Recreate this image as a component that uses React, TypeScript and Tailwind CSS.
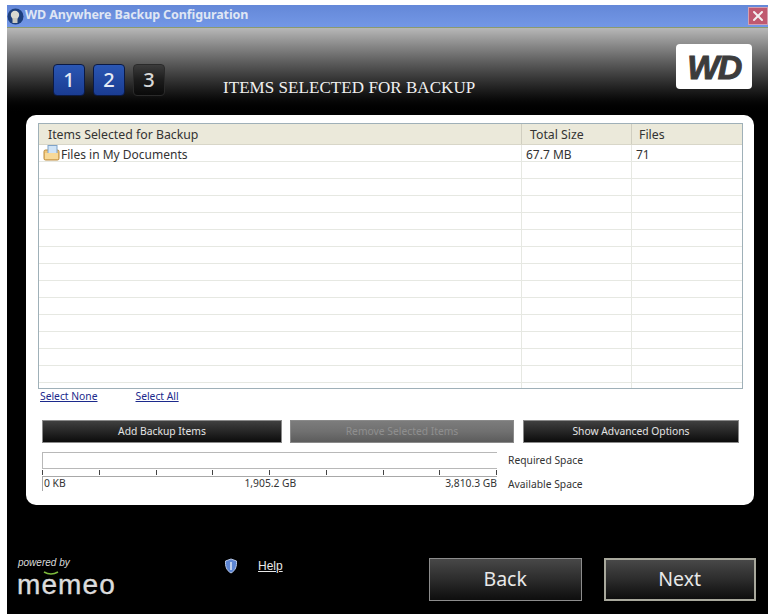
import { X } from "lucide-react";

const rows = [
  { name: "Files in My Documents", size: "67.7 MB", files: "71" },
  ...Array.from({ length: 14 }, () => ({ name: "", size: "", files: "" })),
];

function Step({ n, on }: { n: string; on: boolean }) {
  return (
    <div
      className={
        on
          ? "w-8 h-8 flex items-center justify-center rounded-sm border border-[#0b1a44] bg-gradient-to-b from-[#2b57b4] to-[#1a3c92] text-[#e6ebf5] text-[20px] font-medium"
          : "w-8 h-8 flex items-center justify-center rounded-sm border border-[#2a2a2a] bg-gradient-to-b from-[#3c3c3c] via-[#1c1c1c] to-[#0a0a0a] text-[#d8d8d8] text-[20px] font-medium"
      }
    >
      {n}
    </div>
  );
}

function DarkButton({ label, className }: { label: string; className: string }) {
  return (
    <div
      className={
        "h-[23px] flex items-center justify-center border border-[#8a8a8a] bg-gradient-to-b from-[#404040] via-[#262626] to-[#0c0c0c] text-[#e4e4e4] text-[10.3px] " +
        className
      }
    >
      {label}
    </div>
  );
}

function NavButton({ label, className }: { label: string; className: string }) {
  return (
    <div
      className={
        "h-[43px] pb-[2px] flex items-center justify-center bg-gradient-to-b from-[#484848] via-[#2c2c2c] to-[#0e0e0e] text-[#e8e8e8] text-[19.5px] " +
        className
      }
    >
      {label}
    </div>
  );
}

export default function App() {
  return (
    <div className="w-[773px] h-[615px] bg-white pt-[5px] pl-[7px] pr-[5px] pb-px font-['Noto_Sans',sans-serif] overflow-hidden">
      <div className="h-full flex flex-col bg-black">
        {/* title bar */}
        <div className="h-[23px] shrink-0 flex items-center bg-gradient-to-b from-[#6488d8] to-[#7397e6] border-b border-[#8b9a70]">
          <svg width="17" height="17" viewBox="0 0 17 17" className="shrink-0">
            <circle cx="8.5" cy="8.5" r="8" fill="#1d3f7c" />
            <circle cx="8" cy="7" r="4.2" fill="#d8d8d0" />
            <rect x="5.5" y="10" width="5" height="5" fill="#c9c9c0" />
          </svg>
          <span className="ml-px -mt-[2px] text-[12.5px] font-bold text-[#dfe6f4] tracking-[-0.1px]">
            WD Anywhere Backup Configuration
          </span>
          <div className="ml-auto h-[18px] w-5 flex items-center justify-center bg-[#c0596f] border border-[#d4a0b0]">
            <X size={16} strokeWidth={3} color="#f4f0f0" />
          </div>
        </div>

        {/* header */}
        <div className="h-[87px] shrink-0 flex bg-gradient-to-b from-[#b8b8b8] via-[#333333] via-60% to-black pl-[46px] pr-[16px]">
          <div className="mt-[36px] flex gap-2 h-8">
            <Step n="1" on />
            <Step n="2" on />
            <Step n="3" on={false} />
          </div>
          <div className="ml-[58px] mt-[50px] font-['Liberation_Serif',serif] text-[17px] leading-[20px] text-[#f0f0f0] tracking-[0.06px]">
            ITEMS SELECTED FOR BACKUP
          </div>
          <div className="ml-auto mt-4 w-[76px] h-[45px] rounded-[4px] bg-white flex items-center justify-center">
            <span className="font-['Liberation_Sans',sans-serif] italic font-bold text-[34px] leading-none text-[#3c3c3c] tracking-[-1.5px] [-webkit-text-stroke:1px_#3c3c3c]">
              WD
            </span>
          </div>
        </div>

        {/* panel */}
        <div className="mx-[19px] mr-[14px] h-[390px] shrink-0 rounded-[10px] bg-white pt-2 pl-3 pr-[11px]">
          <div className="h-[266px] border border-[#9fb0b8] overflow-hidden text-[12px] text-[#333333]">
            <div className="h-[21px] flex items-center bg-[#ebe9da] border-b border-[#d8d6c8] leading-none text-[12.3px]">
              <div className="w-[482px] pl-[9px] pt-[3px]">Items Selected for Backup</div>
              <div className="w-[110px] pl-[8px] pt-[3px] border-l border-[#d0cec0] h-full flex items-center">Total Size</div>
              <div className="flex-1 pl-[7px] pt-[3px] border-l border-[#d0cec0] h-full flex items-center">Files</div>
            </div>
            {rows.map((r, i) => (
              <div key={i} className="h-[17px] flex border-b border-[#e6e8e2] leading-[20px]">
                <div className="w-[482px] flex items-start pl-[4px]">
                  {r.name && (
                    <svg width="18" height="16" viewBox="0 0 18 16" className="shrink-0">
                      <rect x="1" y="5" width="15" height="10" rx="1.5" fill="#f2c678" stroke="#b98a3c" />
                      <rect x="5" y="0.5" width="9" height="10" fill="#cfe3f6" stroke="#7fa3c8" />
                      <path d="M2 8h13v6H2z" fill="#f7d998" />
                    </svg>
                  )}
                  <span>{r.name}</span>
                </div>
                <div className="w-[110px] pl-[4px] border-l border-[#e6e8e2]">{r.size}</div>
                <div className="flex-1 pl-[4px] border-l border-[#e6e8e2]">{r.files}</div>
              </div>
            ))}
          </div>

          <div className="-mt-px pl-[2px] flex gap-[38px] text-[10.3px] leading-[16px] text-[#1c2a8c] underline">
            <span>Select None</span>
            <span>Select All</span>
          </div>

          <div className="mt-[16px] pl-1 flex">
            <DarkButton label="Add Backup Items" className="w-[240px]" />
            <DarkButton label="Remove Selected Items" className="ml-2 w-[224px] !from-[#7c7c7c] !via-[#707070] !to-[#5c5c5c] !text-[#8f8f8f]" />
            <DarkButton label="Show Advanced Options" className="ml-[9px] w-[216px]" />
          </div>

          <div className="mt-[9px] pl-1 flex text-[10.3px] text-[#333333]">
            <div className="w-[455px]">
              <div className="h-[17px] border border-r-0 border-[#b8b8b8]" />
              <div className="h-[7px] flex justify-between">
                {Array.from({ length: 9 }, (_, i) => (
                  <div key={i} className="w-px h-[5px] mt-px bg-[#444444]" />
                ))}
              </div>
              <div className="h-[15px] border-t border-l border-[#a8a8a8] flex justify-between pl-px leading-[13px]">
                <span>0 KB</span>
                <span className="ml-[30px]">1,905.2 GB</span>
                <span>3,810.3 GB</span>
              </div>
            </div>
            <div className="ml-[11px] leading-[16px]">
              <div>Required Space</div>
              <div className="mt-2">Available Space</div>
            </div>
          </div>
        </div>

        {/* footer */}
        <div className="flex-1 flex pl-[10px] pr-[12px]">
          <div className="mt-[51px] w-[112px] text-[#dcdcdc] font-['Liberation_Sans',sans-serif] relative">
            <div className="text-[10px] italic leading-[14px] pl-[1px]">powered by</div>
            <svg width="16" height="5" viewBox="0 0 16 5" className="absolute left-[26px] top-[15px]">
              <path d="M1 1q7 4 14 0" fill="none" stroke="#7dbb3c" strokeWidth="1.6" />
            </svg>
            <div className="mt-[2px] text-[28px] leading-[26px] tracking-[1.1px] [-webkit-text-stroke:0.4px_#dcdcdc]">memeo</div>
          </div>
          <div className="mt-[53px] ml-[95px]">
            <svg width="14" height="16" viewBox="0 0 14 16">
              <path d="M7 1l5.5 2c.3 5-.8 9.5-5.5 12C2.300 12.500 1.200 8 1.500 3z" fill="#5d86d4" stroke="#b8c8e8" />
              <path d="M7 4v8" stroke="#dfe8f8" strokeWidth="1.5" />
            </svg>
          </div>
          <div className="mt-[53px] ml-[20px] h-4 text-[12px] leading-4 text-[#e8e8e8] underline font-['Liberation_Sans',sans-serif]">
            Help
          </div>
          <NavButton label="Back" className="mt-[53px] ml-[146px] w-[153px] border border-[#8c8c8c]" />
          <NavButton label="Next" className="mt-[53px] ml-[22px] w-[152px] border-2 border-[#a8a89c]" />
        </div>
      </div>
    </div>
  );
}
